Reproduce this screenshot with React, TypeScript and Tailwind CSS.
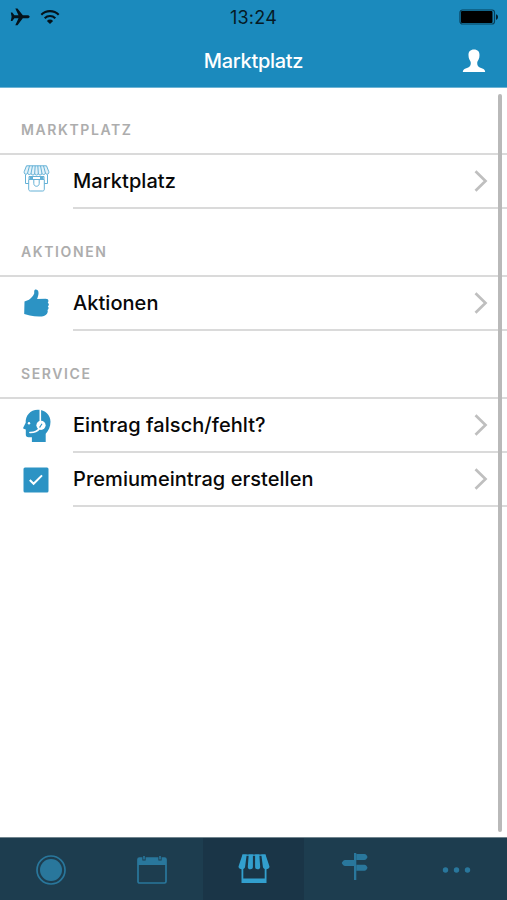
import type { ReactNode } from "react";

function PlaneIcon() {
  return (
    <svg className="h-[18px] w-5" viewBox="0 0 20 18" fill="#05131b">
      <path d="M0.8 4.6h1.5l2.1 2.700h4.100L5.3 0.400h2.200l5.300 6.900h4.600c1.2 0 2.3.6 2.3 1.500s-1.1 1.500-2.3 1.500h-4.600l-5.300 6.900H5.3l3.200-6.900H4.400l-2.1 2.700H.8l.8-4.200z" />
    </svg>
  );
}

function WifiIcon() {
  return (
    <svg className="h-4 w-5" viewBox="0 0 20 16" fill="none" stroke="#05131b" strokeWidth="2.1">
      <path d="M1.3 5.7a12.3 12.3 0 0 1 17.4 0" />
      <path d="M4.7 9.2a7.6 7.6 0 0 1 10.6 0" />
      <path d="M10 15 6.900 11.900a4.400 4.400 0 0 1 6.200 0z" fill="#05131b" stroke="none" />
    </svg>
  );
}

function BatteryIcon() {
  return (
    <svg className="h-4 w-10" viewBox="0 0 40 16">
      <rect x="1" y="1" width="34.5" height="14" rx="2.5" fill="none" stroke="#07405b" strokeWidth="1.2" />
      <rect x="2" y="2" width="31.5" height="12" rx="1" fill="#000" />
      <path d="M37 5.2c1.3.4 2 1.4 2 2.8s-.7 2.4-2 2.8z" fill="#04222f" />
    </svg>
  );
}

function PersonIcon() {
  return (
    <svg className="h-6 w-6" viewBox="0 0 24 24" fill="#fff">
      <path d="M12 .6c3.7 0 5.600 2.200 5.500 5.700 0 1.500-.3 2.900-.8 4-.6 1.300-1.500 2.200-1.500 3.700 0 2.300.8 3.700 2.600 4.500l3.200 1.200c1.300.5 2 1.500 2.200 3.300H.8c.2-1.800.9-2.800 2.200-3.300l3.200-1.200C8 17.700 8.800 16.300 8.800 14c0-1.500-.9-2.400-1.500-3.700-.5-1.100-.8-2.500-.8-4C6.400 2.800 8.300.6 12 .6z" />
    </svg>
  );
}

function ShopBagIcon() {
  return (
    <svg className="mb-[6px] h-[27px] w-[27px]" viewBox="0 0 27 27" fill="none" stroke="#64b1d6" strokeWidth="1">
      <path d="M3.500.8h20l2.300 5.900v1.100a1.800 1.800 0 0 1-3.400.4 1.800 1.800 0 0 1-3.500 0 1.800 1.800 0 0 1-3.600 0 1.800 1.800 0 0 1-3.600 0 1.800 1.800 0 0 1-3.600 0 1.800 1.800 0 0 1-3.500 0 1.800 1.800 0 0 1-3.400-.4V6.700z" fill="#e3f2f9" />
      <path d="M6.500.8 4.600 8M9.500.8 8.100 8M12.200.8 11.700 8M14.800.8l.5 7.200M17.500.8 18.900 8M20.500.8 22.400 8" />
      <path d="M2.500 9.500v9h3.200M24.500 9.500v9h-3.200M6 14v-2.500h15V14" />
      <path d="M5.700 14.500h15.600v9.700c0 1.100-.6 1.800-1.600 1.800H7.300c-1 0-1.600-.7-1.600-1.800zM10.800 14.500v4c0 3.700 5.400 3.700 5.400 0v-4" />
      <path d="M6.500 12h3.500v3H6.500zM17 12h3.500v3H17z" fill="#64b1d6" stroke="none" />
    </svg>
  );
}

function ThumbIcon() {
  return (
    <svg className="mb-[2px] h-7 w-[27px]" viewBox="0 0 27 28" fill="#2c93c4">
      <path d="M1.500 12.400 6 10.800C8.600 8.700 10.200 6.900 11.200 4.500V2.300C11.300.9 12 .4 13 .5c2.100.2 2.600 2 2.500 3.900-.1 2-.8 3.600-1.400 5.600l8.500-.2c2 0 2.900.9 2.800 2.200 0 .9-.4 1.400-.7 1.700.9.5 1.300 1.200 1.100 2.100-.1.700-.5 1.200-1 1.600.6.5.9 1.100.7 2-.2.900-.6 1.400-1.100 1.700.3.500.5 1.100.3 2-.5 2.700-2.800 4.100-5.800 4.300-4.100.3-8.300-.1-12.100-1L1.200 24.900z" />
    </svg>
  );
}

function HeadsetIcon() {
  return (
    <svg className="h-[34px] w-7" viewBox="0 0 28 34">
      <path d="M14.800.8C21.900.6 27.500 5.700 27.500 12.800c0 5-2 8.700-4.800 12V33H8.900v-4.800H5.700c-2.100 0-2.900-1-2.900-2.700v-5l-2.200-.7c-.5-.3-.6-.7-.3-1.200l2.400-4.800C2.400 6.600 7.100 1 14.800.8z" fill="#2c93c4" />
      <path d="M17.300.8v12" stroke="#fff" strokeWidth="1.600" />
      <circle cx="18" cy="16.300" r="4.600" fill="#fff" />
      <circle cx="6" cy="14.200" r="1.200" fill="#fff" />
      <path d="m19 14.800-2.500 3.800" fill="none" stroke="#2c93c4" strokeWidth="1.100" />
      <path d="M16.500 19.500c-2.500 3.300-4.800 4.200-9.600 4" fill="none" stroke="#fff" strokeWidth="1.600" strokeLinecap="round" />
    </svg>
  );
}

function CheckIcon() {
  return (
    <svg className="h-[26px] w-[26px]" viewBox="0 0 26 26">
      <rect x=".5" y=".5" width="25" height="25" rx="1.500" fill="#2c93c4" />
      <path d="m6.800 13 3.800 3.800 8.400-8.400" fill="none" stroke="#fff" strokeWidth="2" />
    </svg>
  );
}

function Chevron() {
  return (
    <svg className="mr-[19px] h-6 w-[14px]" viewBox="0 0 14 24" fill="none" stroke="#bfbfbf" strokeWidth="2.700">
      <path d="m1.500 2.200 10 9.800-10 9.800" />
    </svg>
  );
}

function CircleIcon() {
  return (
    <svg className="h-8 w-8" viewBox="0 0 32 32">
      <circle cx="16" cy="16" r="14" fill="none" stroke="#29779c" strokeWidth="1.700" />
      <circle cx="16" cy="16" r="11" fill="#29779c" />
    </svg>
  );
}

function CalendarIcon() {
  return (
    <svg className="h-8 w-8" viewBox="0 0 32 32">
      <rect x="2" y="4" width="28" height="25" rx="1.500" fill="none" stroke="#29779c" strokeWidth="1.700" />
      <path d="M2 4h28v7H2z" fill="#29779c" />
      <path d="M8 2v4.500M24 2v4.500" stroke="#1d3d4f" strokeWidth="3.200" />
      <path d="M8 2v3.500M24 2v3.500" stroke="#29779c" strokeWidth="1.600" />
    </svg>
  );
}

function StoreIcon() {
  return (
    <svg className="ml-[2px] h-8 w-8" viewBox="0 0 32 32" fill="#329fce">
      <path d="M4.500 1.500h4.200L7.100 13.800c-.1 1.600-1.400 2.500-3.200 2.500S.5 15.400.5 13.600zM10.700 1.500h4.200v12.600c0 1.400-1.100 2.200-2.500 2.200-1.500 0-2.600-.9-2.600-2.300zM17.100 1.500h4.200l.9 12.500c0 1.400-1.100 2.300-2.600 2.300-1.400 0-2.500-.8-2.500-2.200zM23.300 1.500h4.200l4 12.100c0 1.800-1.600 2.700-3.400 2.700s-3.100-.9-3.200-2.500z" />
      <path d="M4.500 1.500h23v1.300h-23z" />
      <path fillRule="evenodd" d="M3.500 15h1.800v10.500h21.400V15h1.800v15h-25z" />
    </svg>
  );
}

function SignsIcon() {
  return (
    <svg className="h-8 w-8" viewBox="0 0 32 32" fill="#29779c">
      <path d="M15 1h2.300v27H15z" />
      <path d="M17.300 2h8.200q1 0 1.700.8l1 1.400q.6.800 0 1.600l-1 1.400q-.7.800-1.700.8h-8.200zM15 8v6H6q-1 0-1.700-.8l-1.200-1.400q-.6-.8 0-1.600l1.200-1.400Q5 8 6 8zM17.300 12.800h8.200q1 0 1.700.8l1 1.400q.6.800 0 1.600l-1 1.400q-.7.800-1.700.8h-8.200z" />
    </svg>
  );
}

function DotsIcon() {
  return (
    <svg className="h-8 w-8" viewBox="0 0 32 32" fill="#29779c">
      <circle cx="5.500" cy="16" r="2.700" /><circle cx="16.500" cy="16" r="2.700" /><circle cx="27.500" cy="16" r="2.700" />
    </svg>
  );
}

function SectionTitle({ children }: { children: ReactNode }) {
  return (
    <h2 className="flex h-[68px] items-end border-b-2 border-[#dadada] pb-[15px] pl-[21px] text-[14px] leading-4 font-semibold tracking-[1.600px] text-[#adadad]">
      {children}
    </h2>
  );
}

function Row({ icon, label }: { icon: ReactNode; label: string }) {
  return (
    <div className="flex h-[54px]">
      <div className="flex w-[73px] shrink-0 items-center pb-px pl-[23px]">{icon}</div>
      <div className="flex flex-1 items-center justify-between border-b-2 border-[#dadada]">
        <span className="text-[20px] leading-6 font-medium tracking-[0.050px] whitespace-nowrap text-[#080808]">{label}</span>
        <Chevron />
      </div>
    </div>
  );
}

export default function App() {
  return (
    <div className="flex h-[900px] w-[507px] flex-col overflow-hidden bg-white font-['Inter','Liberation_Sans',sans-serif]">
      <header className="h-[88px] shrink-0 border-b border-[#6eb4d5] bg-[#1b8abd]">
        <div className="grid h-[34px] grid-cols-3 items-center">
          <div className="flex items-center gap-[10px] pl-[10px]">
            <PlaneIcon />
            <WifiIcon />
          </div>
          <span className="pt-px text-center text-[18px] leading-5 tracking-[0.200px] text-[#061a25]">13:24</span>
          <div className="flex justify-end pr-[8px]"><BatteryIcon /></div>
        </div>
        <div className="grid h-[53px] grid-cols-3 items-center">
          <h1 className="col-start-2 text-center text-[20px] leading-6 font-medium tracking-[-0.300px] text-white">Marktplatz</h1>
          <div className="flex justify-end pr-[21px]"><PersonIcon /></div>
        </div>
      </header>

      <main className="relative min-h-0 flex-1">
        <div className="-mt-px">
          <SectionTitle>MARKTPLATZ</SectionTitle>
          <Row icon={<ShopBagIcon />} label="Marktplatz" />
          <SectionTitle>AKTIONEN</SectionTitle>
          <Row icon={<ThumbIcon />} label="Aktionen" />
          <SectionTitle>SERVICE</SectionTitle>
          <Row icon={<HeadsetIcon />} label="Eintrag falsch/fehlt?" />
          <Row icon={<CheckIcon />} label="Premiumeintrag erstellen" />
        </div>
        <div className="absolute top-[6px] right-[5px] bottom-[5px] w-1 rounded-full bg-[#b9b9b9]" />
      </main>

      <nav className="grid h-[63px] shrink-0 grid-cols-5 border-t border-[#71858e] bg-[#1d3d4f]">
        <div className="flex items-center justify-center pt-px"><CircleIcon /></div>
        <div className="flex items-center justify-center pt-px"><CalendarIcon /></div>
        <div className="flex items-center justify-center bg-[#1a3547]"><StoreIcon /></div>
        <div className="flex items-start justify-center pt-[14px]"><SignsIcon /></div>
        <div className="flex items-center justify-center pt-px"><DotsIcon /></div>
      </nav>
    </div>
  );
}
